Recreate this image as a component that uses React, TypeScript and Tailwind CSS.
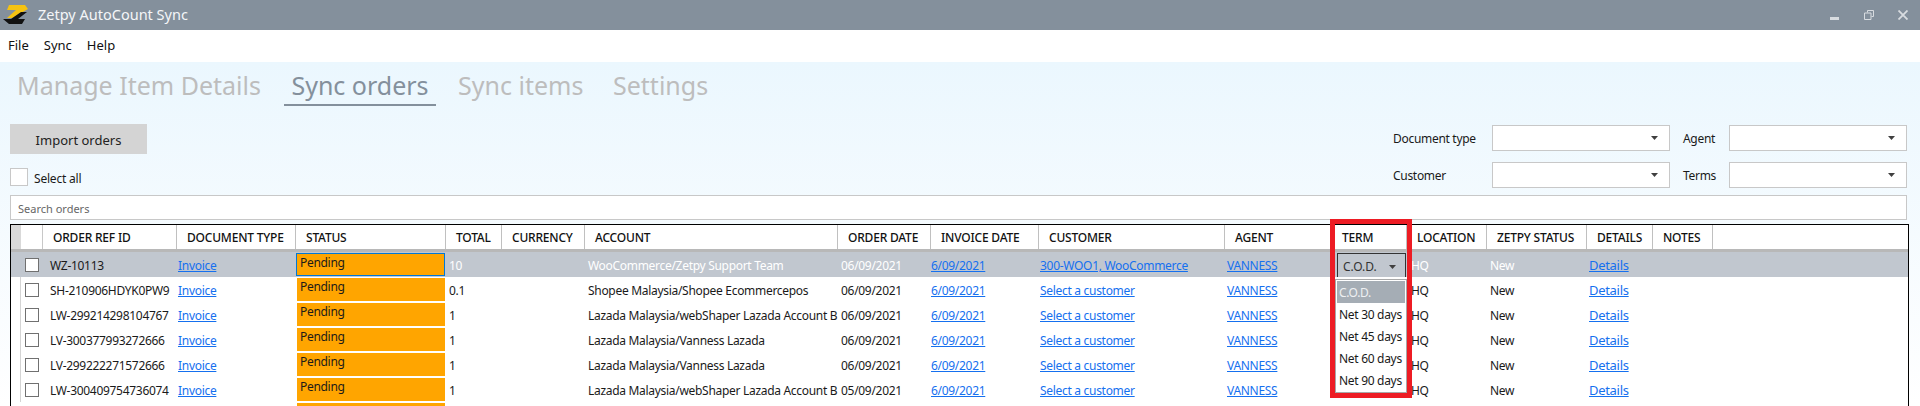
import React from 'react';

const columns = [
  { name: '', w: 'w-[32px]' },
  { name: 'ORDER REF ID', w: 'w-[134px]' },
  { name: 'DOCUMENT TYPE', w: 'w-[119px]' },
  { name: 'STATUS', w: 'w-[150px]' },
  { name: 'TOTAL', w: 'w-[56px]' },
  { name: 'CURRENCY', w: 'w-[83px]' },
  { name: 'ACCOUNT', w: 'w-[253px]' },
  { name: 'ORDER DATE', w: 'w-[93px]' },
  { name: 'INVOICE DATE', w: 'w-[108px]' },
  { name: 'CUSTOMER', w: 'w-[186px]' },
  { name: 'AGENT', w: 'w-[107px]' },
  { name: 'TERM', w: 'w-[75px]' },
  { name: 'LOCATION', w: 'w-[80px]' },
  { name: 'ZETPY STATUS', w: 'w-[100px]' },
  { name: 'DETAILS', w: 'w-[66px]' },
  { name: 'NOTES', w: 'w-[60px]' },
];

const orders = [
  { id: 'WZ-10113', total: '10', account: 'WooCommerce/Zetpy Support Team', date: '06/09/2021', customer: '300-WOO1, WooCommerce' },
  { id: 'SH-210906HDYK0PW9', total: '0.1', account: 'Shopee Malaysia/Shopee Ecommercepos', date: '06/09/2021', customer: 'Select a customer' },
  { id: 'LW-299214298104767', total: '1', account: 'Lazada Malaysia/webShaper Lazada Account B', date: '06/09/2021', customer: 'Select a customer' },
  { id: 'LV-300377993272666', total: '1', account: 'Lazada Malaysia/Vanness Lazada', date: '06/09/2021', customer: 'Select a customer' },
  { id: 'LV-299222271572666', total: '1', account: 'Lazada Malaysia/Vanness Lazada', date: '06/09/2021', customer: 'Select a customer' },
  { id: 'LW-300409754736074', total: '1', account: 'Lazada Malaysia/webShaper Lazada Account B', date: '05/09/2021', customer: 'Select a customer' },
];

const terms = ['C.O.D.', 'Net 30 days', 'Net 45 days', 'Net 60 days', 'Net 90 days'];

const Caret = () => (
  <svg width="7" height="4" viewBox="0 0 7 4" className="shrink-0">
    <path d="M0 0h7L3.500 4z" fill="#404040" />
  </svg>
);

const Logo = () => (
  <svg width="30" height="30" viewBox="0 0 30 30">
    <path d="M9 5h16l3 4-16 9H7l9-8H7z" fill="#f5c211" />
    <path d="M27 12l-9 7h7l-3 5H9l-6-5h8l10-7z" fill="#111" />
  </svg>
);

const FilterSelect = ({ label, labelW }: { label: string; labelW: string }) => (
  <div className="flex items-center">
    <span className={`${labelW} pt-px text-xs tracking-[-0.3px] text-[#1a1a1a]`}>{label}</span>
    <div className="flex h-[26px] w-[178px] items-center justify-end border border-[#c8c8c8] bg-white pr-[11px]">
      <Caret />
    </div>
  </div>
);

const Link = ({ children }: { children: React.ReactNode }) => (
  <span className="text-[#1570ef] underline">{children}</span>
);

const OrderRow = ({ order, selected }: { order: (typeof orders)[number]; selected: boolean }) => {
  const textColor = selected ? 'text-white' : 'text-[#1a1a1a]';
  return (
    <div className={`flex h-[25px] items-center text-xs tracking-[-0.3px] whitespace-nowrap ${selected ? 'bg-[#c1c7cf]' : 'bg-white'}`}>
      <div className="flex h-full w-[32px] shrink-0 items-center">
        <div className={`h-full w-[10px] ${selected ? '' : 'border-r border-[#d4d4d4]'}`} />
        <div className="ml-[4px] h-[14px] w-[14px] border border-[#707070] bg-white" />
      </div>
      <div className="w-[134px] shrink-0 pt-[2px] pl-[7px] text-[#1a1a1a]">{order.id}</div>
      <div className="w-[119px] shrink-0 pt-[2px] pl-[1px]"><Link>Invoice</Link></div>
      <div className={`h-full w-[150px] shrink-0 py-px ${selected ? 'pr-[1px]' : 'px-[1px]'}`}>
        <div className={`h-full bg-[#ffa500] pl-[3px] leading-[18px] text-[#1a1a1a] ${selected ? 'border border-[#0078d7]' : ''}`}>Pending</div>
      </div>
      <div className={`w-[56px] shrink-0 pt-[2px] pl-[3px] ${textColor}`}>{order.total}</div>
      <div className="w-[83px] shrink-0" />
      <div className={`w-[253px] shrink-0 pt-[2px] pl-[3px] ${textColor}`}>{order.account}</div>
      <div className={`w-[93px] shrink-0 pt-[2px] pl-[3px] ${textColor}`}>{order.date}</div>
      <div className="w-[108px] shrink-0 pt-[2px]"><Link>6/09/2021</Link></div>
      <div className="w-[186px] shrink-0 pt-[2px] pl-[1px]"><Link>{order.customer}</Link></div>
      <div className="w-[107px] shrink-0 pt-[2px] pl-[2px]"><Link>VANNESS</Link></div>
      <div className="w-[75px] shrink-0" />
      <div className={`w-[80px] shrink-0 pt-[2px] pl-[4px] ${textColor}`}>HQ</div>
      <div className={`w-[100px] shrink-0 pt-[2px] pl-[3px] ${textColor}`}>New</div>
      <div className="shrink-0 pt-[2px] pl-[2px] text-[13px]"><Link>Details</Link></div>
    </div>
  );
};

export default function App() {
  return (
    <div className="relative flex h-[406px] w-[1920px] flex-col overflow-hidden bg-white font-['Noto_Sans','Open_Sans',sans-serif]">
      <div className="flex h-[30px] shrink-0 items-center bg-[#84909c]">
        <Logo />
        <span className="ml-[8px] text-[14.500px] text-[#f4f6f8]">Zetpy AutoCount Sync</span>
        <div className="mr-[12px] ml-auto flex items-center gap-[24px]">
          <svg width="10" height="10" viewBox="0 0 10 10"><rect x="0" y="7" width="9" height="3" fill="#d8dce0" /></svg>
          <svg width="10" height="10" viewBox="0 0 10 10" fill="none" stroke="#d8dce0"><path d="M3.500 2.500v-2h6v6h-2M.5 3h6.500v6.500h-6.500z" /></svg>
          <svg width="10" height="10" viewBox="0 0 10 10" fill="none" stroke="#d8dce0" strokeWidth="1.8"><path d="M.5.5l9 9M9.500.5l-9 9" /></svg>
        </div>
      </div>
      <div className="flex h-[32px] shrink-0 items-center gap-[15px] pl-[8px] text-[13px] text-[#111]">
        <span>File</span>
        <span>Sync</span>
        <span>Help</span>
      </div>
      <div className="flex min-h-0 flex-1 flex-col bg-gradient-to-b from-[#ebf7fe] to-white px-[10px]">
        <div className="flex h-[44px] shrink-0 items-stretch pt-[5px] pl-[7px] text-[25px] leading-[36px] whitespace-nowrap text-[#bdbdbd]">
          <span className="w-[267px]">Manage Item Details</span>
          <span className="w-[152px] border-b-2 border-[#84909c] text-center text-[#84909c]">Sync orders</span>
          <span className="w-[155px] pl-[22px]">Sync items</span>
          <span className="pl-[22px]">Settings</span>
        </div>
        <div className="flex justify-between pt-[18px]">
          <div>
            <div className="flex h-[30px] w-[137px] items-center justify-center bg-[#d4d4d4] pt-[3px] text-[13px] text-[#222]">Import orders</div>
            <div className="mt-[14px] flex h-[18px] items-center gap-[6px] text-xs tracking-[-0.2px] text-[#1a1a1a]">
              <div className="h-[18px] w-[18px] border border-[#c8c8c8] bg-white" />
              <span className="pt-[3px]">Select all</span>
            </div>
          </div>
          <div className="grid grid-cols-[auto_auto] gap-x-[13px] gap-y-[11px] pt-px pr-[3px]">
            <FilterSelect label="Document type" labelW="w-[99px]" />
            <FilterSelect label="Agent" labelW="w-[46px]" />
            <FilterSelect label="Customer" labelW="w-[99px]" />
            <FilterSelect label="Terms" labelW="w-[46px]" />
          </div>
        </div>
        <div className="mt-[7px] mr-[3px] flex h-[25px] shrink-0 items-center border border-[#c8c8c8] bg-white pt-[3px] pl-[7px] text-[11px] text-[#666]">Search orders</div>
        <div className="mt-[4px] mr-px min-h-0 flex-1 border-x border-t border-black bg-white">
          <div className="flex h-[27px] border-b-[3px] border-[#b8b8b8] bg-white text-xs font-medium tracking-[-0.2px] text-[#111]">
            {columns.map((c, i) =>
              i === 0 ? (
                <div key={i} className={`${c.w} shrink-0 border-r border-[#c8c8c8]`}>
                  <div className="h-full w-[10px] bg-[#d9d9d9]" />
                </div>
              ) : (
                <div key={i} className={`${c.w} flex shrink-0 items-center border-r border-[#c0c0c0] pt-[2px] pl-[10px] whitespace-nowrap`}>{c.name}</div>
              ),
            )}
          </div>
          {orders.map((o, i) => (
            <OrderRow key={o.id} order={o} selected={i === 0} />
          ))}
          {/* next row, cut off by the window */}
          <div className="mt-px ml-[286px] h-[24px] w-[148px] bg-[#ffa500]" />
        </div>
      </div>

      {/* term dropdown sits over the table */}
      <div className="absolute top-[253px] left-[1337px] flex h-[24px] w-[69px] items-center justify-between border border-b-0 border-[#333] bg-[#c1c7cf] pt-[2px] pr-[9px] pl-[5px] text-xs text-[#333]">
        C.O.D.
        <Caret />
      </div>
      <div className="absolute top-[279px] left-[1335px] w-[72px] border border-[#a8a8a8] bg-white p-[1px] text-xs tracking-[-0.3px] text-[#1a1a1a]">
        {terms.map((t, i) => (
          <div key={t} className={`flex h-[22px] items-center pt-[2px] pl-[2px] whitespace-nowrap ${i === 0 ? 'bg-[#a5adb5] text-[#eef0f2]' : ''}`}>{t}</div>
        ))}
      </div>
      {/* red annotation */}
      <div className="pointer-events-none absolute top-[219px] left-[1330px] h-[179px] w-[82px] border-[5px] border-[#ed1c24]" />
    </div>
  );
}
